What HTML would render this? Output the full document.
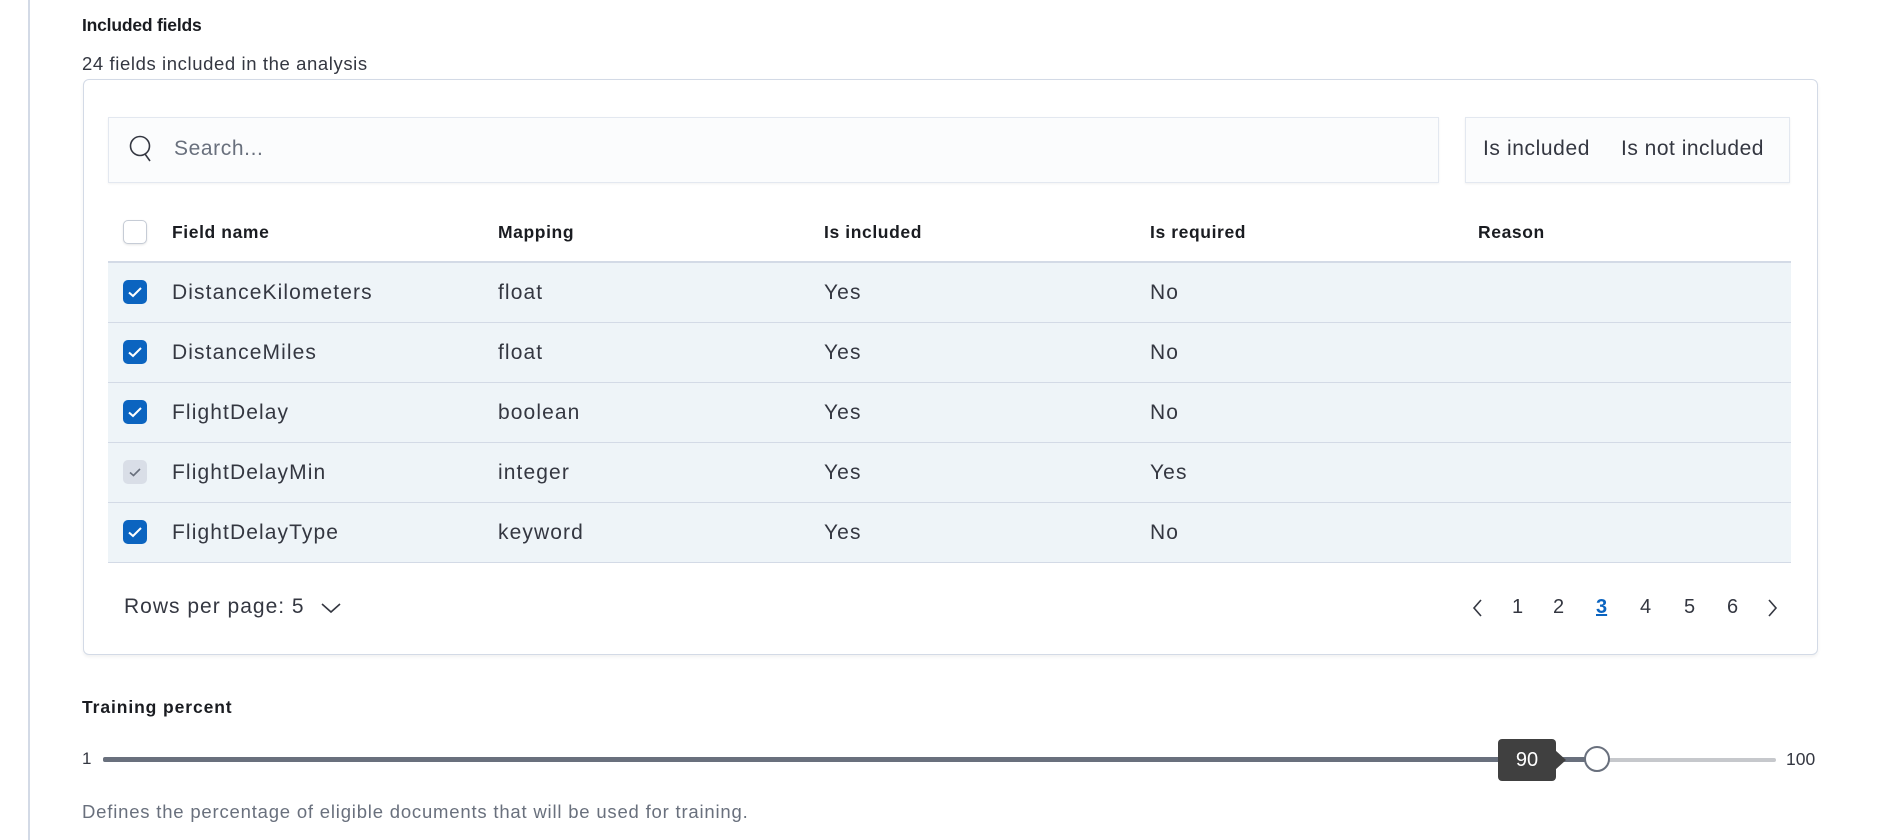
<!DOCTYPE html>
<html><head><meta charset="utf-8"><style>
*{box-sizing:border-box;margin:0;padding:0}
body{width:1878px;height:840px;background:#fff;font-family:"Liberation Sans",sans-serif;color:#343741;position:relative;overflow:hidden}
.a{position:absolute;white-space:nowrap}
.t{font-weight:bold;font-size:17.5px;letter-spacing:0.6px;color:#1a1c21}
.cb{position:absolute;width:24px;height:24px;border-radius:5px;background:#0b64c0}
.cb svg{position:absolute;left:4px;top:4px}
.row{position:absolute;left:108px;width:1683px;height:60px;background:#eef4f8;border-bottom:1px solid #d3dae6}
.row span{position:absolute;top:0;line-height:59px;font-size:21px;letter-spacing:1.1px;color:#343741}
.pg{position:absolute;top:596px;font-size:20px;color:#343741}
</style></head><body>
<div class="a" style="left:28px;top:0;width:2px;height:840px;background:#d3dae6"></div>
<div class="a t" style="left:82px;top:15px;letter-spacing:-0.2px">Included fields</div>
<div class="a" style="left:82px;top:53px;font-size:18.5px;letter-spacing:0.6px;color:#343741">24 fields included in the analysis</div>

<div class="a" style="left:83px;top:79px;width:1735px;height:576px;border:1px solid #d3dae6;border-radius:6px;box-shadow:0 2px 3px rgba(0,0,0,0.06)"></div>

<div class="a" style="left:108px;top:117px;width:1331px;height:66px;background:#fbfcfd;border:1px solid #e3e8f0;box-shadow:0 1px 2px rgba(0,0,0,0.05)"></div>
<svg class="a" style="left:127px;top:134px" width="30" height="30" viewBox="0 0 30 30"><circle cx="13" cy="12" r="9.5" fill="none" stroke="#343741" stroke-width="1.6"/><path d="M18 20 L23 27" stroke="#343741" stroke-width="1.6" fill="none"/></svg>
<div class="a" style="left:174px;top:137px;font-size:21px;letter-spacing:0.6px;color:#69707d">Search...</div>

<div class="a" style="left:1465px;top:117px;width:325px;height:66px;background:#fbfcfd;border:1px solid #e3e8f0;box-shadow:0 1px 2px rgba(0,0,0,0.06)"></div>
<div class="a" style="left:1483px;top:137px;font-size:21px;letter-spacing:0.6px">Is included</div>
<div class="a" style="left:1621px;top:137px;font-size:21px;letter-spacing:0.5px">Is not included</div>

<div class="a" style="left:123px;top:220px;width:24px;height:24px;border:1px solid #c6ccd6;border-radius:5px;background:#fff;box-shadow:0 1px 2px rgba(0,0,0,0.1)"></div>
<div class="a t" style="left:172px;top:222px">Field name</div>
<div class="a t" style="left:498px;top:222px">Mapping</div>
<div class="a t" style="left:824px;top:222px">Is included</div>
<div class="a t" style="left:1150px;top:222px">Is required</div>
<div class="a t" style="left:1478px;top:222px">Reason</div>
<div class="a" style="left:108px;top:261px;width:1683px;height:2px;background:#d3dae6"></div>

<div class="row" style="top:263px"><span style="left:64px">DistanceKilometers</span><span style="left:390px">float</span><span style="left:716px">Yes</span><span style="left:1042px">No</span></div>
<div class="row" style="top:323px"><span style="left:64px">DistanceMiles</span><span style="left:390px">float</span><span style="left:716px">Yes</span><span style="left:1042px">No</span></div>
<div class="row" style="top:383px"><span style="left:64px">FlightDelay</span><span style="left:390px">boolean</span><span style="left:716px">Yes</span><span style="left:1042px">No</span></div>
<div class="row" style="top:443px"><span style="left:64px">FlightDelayMin</span><span style="left:390px">integer</span><span style="left:716px">Yes</span><span style="left:1042px">Yes</span></div>
<div class="row" style="top:503px"><span style="left:64px">FlightDelayType</span><span style="left:390px">keyword</span><span style="left:716px">Yes</span><span style="left:1042px">No</span></div>

<div class="cb" style="left:123px;top:280px"><svg width="16" height="16"><path d="M2 8.5 L6 12 L14 4" stroke="#fff" stroke-width="2" fill="none"/></svg></div>
<div class="cb" style="left:123px;top:340px"><svg width="16" height="16"><path d="M2 8.5 L6 12 L14 4" stroke="#fff" stroke-width="2" fill="none"/></svg></div>
<div class="cb" style="left:123px;top:400px"><svg width="16" height="16"><path d="M2 8.5 L6 12 L14 4" stroke="#fff" stroke-width="2" fill="none"/></svg></div>
<div class="cb" style="left:123px;top:460px;background:#d9dee7"><svg width="16" height="16"><path d="M3 8.5 L6.5 11.5 L13 5" stroke="#69707d" stroke-width="1.6" fill="none"/></svg></div>
<div class="cb" style="left:123px;top:520px"><svg width="16" height="16"><path d="M2 8.5 L6 12 L14 4" stroke="#fff" stroke-width="2" fill="none"/></svg></div>

<div class="a" style="left:124px;top:595px;font-size:21px;letter-spacing:1px">Rows per page: 5</div>
<svg class="a" style="left:320px;top:600px" width="22" height="16"><path d="M2 4 L11 12 L20 4" stroke="#343741" stroke-width="1.6" fill="none"/></svg>
<svg class="a" style="left:1470px;top:597px" width="16" height="22"><path d="M11 3 L4 11 L11 19" stroke="#343741" stroke-width="1.6" fill="none"/></svg>
<div class="pg" style="left:1512px">1</div>
<div class="pg" style="left:1553px">2</div>
<div class="pg" style="left:1596px;color:#0b64c0;font-weight:bold;text-decoration:underline">3</div>
<div class="pg" style="left:1640px">4</div>
<div class="pg" style="left:1684px">5</div>
<div class="pg" style="left:1727px">6</div>
<svg class="a" style="left:1764px;top:597px" width="16" height="22"><path d="M5 3 L12 11 L5 19" stroke="#343741" stroke-width="1.6" fill="none"/></svg>

<div class="a t" style="left:82px;top:697px;letter-spacing:0.9px">Training percent</div>
<div class="a" style="left:82px;top:749px;font-size:17px">1</div>
<div class="a" style="left:103px;top:758px;width:1673px;height:4px;background:#c6c8cc;border-radius:2px"></div>
<div class="a" style="left:103px;top:757px;width:1494px;height:5px;background:#69707d;border-radius:2px"></div>
<div class="a" style="left:1584px;top:746px;width:26px;height:26px;border-radius:50%;background:#fff;border:2px solid #69707d"></div>
<div class="a" style="left:1498px;top:739px;width:58px;height:42px;background:#404040;border-radius:4px;color:#fff;font-size:20px;line-height:42px;text-align:center">90</div>
<svg class="a" style="left:1555px;top:750px" width="12" height="20"><path d="M0 0 L11 10 L0 20 Z" fill="#404040"/></svg>
<div class="a" style="left:1786px;top:749px;font-size:17.5px">100</div>
<div class="a" style="left:82px;top:801px;font-size:18.5px;letter-spacing:0.8px;color:#69707d">Defines the percentage of eligible documents that will be used for training.</div>
</body></html>
